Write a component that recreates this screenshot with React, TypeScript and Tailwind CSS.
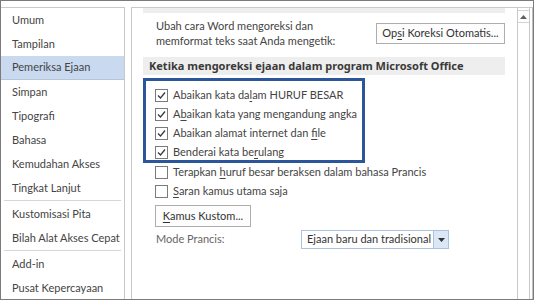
const navItems: (string | null)[] = [
  'Umum',
  'Tampilan',
  'Pemeriksa Ejaan',
  'Simpan',
  'Tipografi',
  'Bahasa',
  'Kemudahan Akses',
  'Tingkat Lanjut',
  null,
  'Kustomisasi Pita',
  'Bilah Alat Akses Cepat',
  null,
  'Add-in',
  'Pusat Kepercayaan',
];

type Opt = { pre: string; key: string; post: string; checked: boolean };

const boxed: Opt[] = [
  { pre: 'Abaikan kata da', key: 'l', post: 'am HURUF BESAR', checked: true },
  { pre: 'A', key: 'b', post: 'aikan kata yang mengandung angka', checked: true },
  { pre: 'Abaikan alamat internet dan ', key: 'f', post: 'ile', checked: true },
  { pre: 'Benderai kata be', key: 'r', post: 'ulang', checked: true },
];

const rest: Opt[] = [
  { pre: 'Terapkan ', key: 'h', post: 'uruf besar beraksen dalam bahasa Prancis', checked: false },
  { pre: '', key: 'S', post: 'aran kamus utama saja', checked: false },
];

function CheckBox({ checked }: { checked: boolean }) {
  return (
    <span className="w-[13px] h-[13px] border border-[#7a7a7a] bg-white flex items-center justify-center shrink-0">
      {checked && (
        <svg width="11" height="11" viewBox="0 0 11 11">
          <path d="M2 5.5 L4.5 8 L9 2.5" fill="none" stroke="#3a3a3a" strokeWidth="1.3" />
        </svg>
      )}
    </span>
  );
}

function Row({ o }: { o: Opt }) {
  return (
    <div className="h-[19px] flex items-center gap-[5px]">
      <CheckBox checked={o.checked} />
      <span className="whitespace-nowrap">
        {o.pre}
        <span className="underline underline-offset-2">{o.key}</span>
        {o.post}
      </span>
    </div>
  );
}

export default function App() {
  return (
    <div
      className="w-[534px] h-[300px] border border-[#7b7b7b] bg-white flex pt-[6px] overflow-hidden text-[11px] text-[#444]"
      style={{ fontFamily: 'Lato, "Noto Sans", sans-serif' }}
    >
      {/* left nav */}
      <div className="w-[124px] shrink-0 border-t border-r border-[#c9c9c9]">
        {navItems.map((item, i) =>
          item === null ? (
            <div key={i} className="h-[2px] px-[3px]">
              <div className="h-px bg-[#d6d6d6]" />
            </div>
          ) : (
            <div
              key={i}
              className={`h-[24px] flex items-center pl-[11px] whitespace-nowrap ${
                item === 'Pemeriksa Ejaan' ? 'bg-[#c8d9f0] border-b border-[#b6c4d8]' : ''
              }`}
            >
              {item}
            </div>
          ),
        )}
      </div>

      {/* right panel */}
      <div className="ml-[6px] flex-1 flex border-t border-l border-[#c9c9c9] min-w-0">
        <div className="flex-1 pl-[11px] pr-[12px]">
          <div className="h-[5px] bg-[#eeeeee]" />

          <div className="mt-[5px] flex items-center justify-between">
            <div className="pl-[13px] leading-[15px]">
              Ubah cara Word mengoreksi dan
              <br />
              memformat teks saat Anda mengetik:
            </div>
            <button
              type="button"
              className="w-[129px] h-[21px] border border-[#adadad] bg-[#fdfdfd] text-[#333] whitespace-nowrap"
            >
              Op<span className="underline underline-offset-2">s</span>i Koreksi Otomatis...
            </button>
          </div>

          <div
            className="mt-[9px] h-[18px] bg-[#eeeeee] pl-[6px] flex items-center font-bold text-[#3a3a3a] whitespace-nowrap"
            style={{ fontFamily: '"Noto Sans", sans-serif' }}
          >
            Ketika mengoreksi ejaan dalam program Microsoft Office
          </div>

          <div className="mt-[3px] w-[222px] h-[85px] border-[3px] border-[#2b579a] pt-[5px] pl-[9px]">
            {boxed.map((o) => (
              <Row key={o.pre + o.key} o={o} />
            ))}
          </div>

          <div className="pl-[12px]">
            {rest.map((o) => (
              <Row key={o.pre + o.key} o={o} />
            ))}
          </div>

          <button
            type="button"
            className="mt-[4px] ml-[12px] w-[96px] h-[22px] border border-[#adadad] bg-[#fdfdfd] text-[#333]"
          >
            <span className="underline underline-offset-2">K</span>amus Kustom...
          </button>

          <div className="mt-[3px] flex items-center">
            <div className="w-[158px] pl-[13px] text-[#666]">Mode Prancis:</div>
            <div className="w-[148px] h-[19px] border border-[#a9c1e3] flex">
              <div className="flex-1 pl-[5px] flex items-center whitespace-nowrap text-[#333]">
                Ejaan baru dan tradisional
              </div>
              <div className="w-[15px] bg-[#dce7f5] border-l border-[#a9c1e3] flex items-center justify-center">
                <svg width="7" height="4" viewBox="0 0 7 4">
                  <path d="M0 0 H7 L3.5 4 Z" fill="#333" />
                </svg>
              </div>
            </div>
          </div>
        </div>

        {/* scrollbar */}
        <div className="w-[13px] border-x border-[#c9c9c9] flex flex-col">
          <div className="h-[13px] mt-[2px] border-y border-[#d4d4d4] flex items-center justify-center">
            <svg width="7" height="4" viewBox="0 0 7 4">
              <path d="M0 4 H7 L3.5 0 Z" fill="#606060" />
            </svg>
          </div>
        </div>
        <div className="w-[3px] border-r border-[#c0c0c0]" />
      </div>
    </div>
  );
}
